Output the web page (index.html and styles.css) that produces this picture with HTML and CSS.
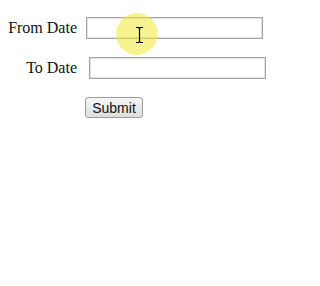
FILE: index.html
```html
<!DOCTYPE html>
<html>
<head>
<meta charset="utf-8">
<link rel="stylesheet" href="styles.css">
</head>
<body>
<form class="form">
  <div class="row">
    <label class="label">From Date</label>
    <input class="field field-from" type="text">
  </div>
  <div class="row">
    <label class="label">To Date</label>
    <input class="field field-to" type="text">
  </div>
  <div class="actions">
    <button class="submit" type="button">Submit</button>
  </div>
</form>
<div class="highlight"></div>
<svg class="cursor" width="9" height="18" viewBox="0 0 9 18">
  <path d="M1 1.5 H3.5 L4.5 2.5 L5.5 1.5 H8 M4.5 2.5 V15.5 M1 16.5 H3.5 L4.5 15.5 L5.5 16.5 H8" fill="none" stroke="#000" stroke-width="1.2"/>
</svg>
</body>
</html>
```
FILE: styles.css
```css
html, body {
  margin: 0;
  padding: 0;
  background: #ffffff;
}
body {
  width: 287px;
  height: 286px;
  position: relative;
  overflow: hidden;
}
.form {
  display: flex;
  flex-direction: column;
  gap: 18px;
  padding-top: 17px;
}
.row {
  display: flex;
  align-items: center;
  height: 22px;
}
.label {
  width: 77px;
  text-align: right;
  font-family: "Liberation Serif", "Times New Roman", serif;
  font-size: 16px;
  color: #111;
}
.field {
  box-sizing: border-box;
  width: 177px;
  height: 22px;
  margin: 0;
  border: 1px solid #a4a4a4;
  box-shadow: inset 0 0 0 1px #e4e4e4;
  background: #fff;
  padding: 0 3px;
}
.field-from { margin-left: 9px; }
.field-to { margin-left: 12px; }
.actions {
  display: flex;
  padding-left: 85px;
}
.submit {
  box-sizing: border-box;
  width: 58px;
  height: 21px;
  margin: 0;
  padding: 0;
  font-family: "Liberation Sans", Arial, sans-serif;
  font-size: 14px;
  color: #111;
  border: 1px solid #9c9c9c;
  border-radius: 3px;
  background: linear-gradient(#f6f6f6, #dedede);
}
.highlight {
  position: absolute;
  left: 116px;
  top: 13px;
  width: 42px;
  height: 42px;
  border-radius: 50%;
  background: radial-gradient(circle, rgba(240,234,50,0.55) 65%, rgba(240,234,50,0.4) 100%);
}
.cursor {
  position: absolute;
  left: 135px;
  top: 26px;
}
```
